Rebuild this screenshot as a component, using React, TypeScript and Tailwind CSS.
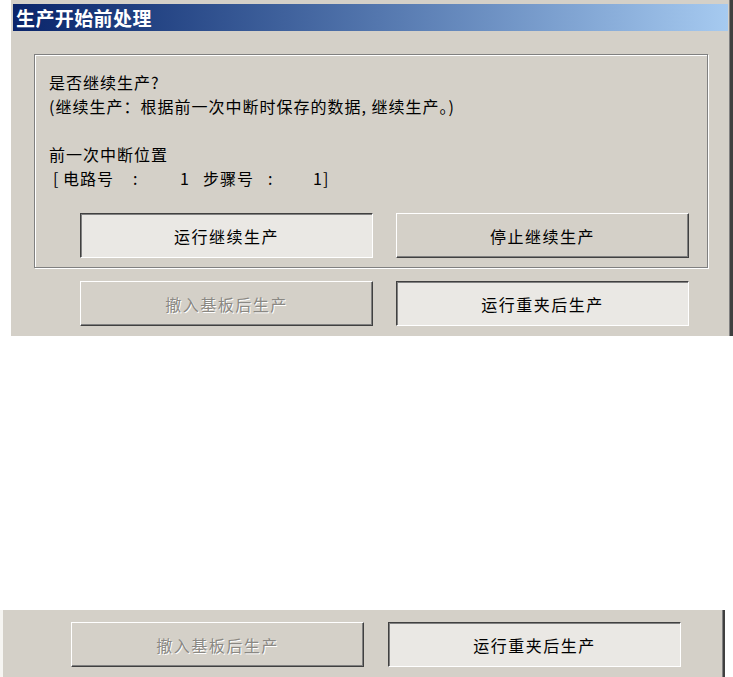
import React from "react";

type Kind = "raised" | "pressed" | "disabled";

function ClassicButton({ label, kind }: { label: string; kind: Kind }) {
  const frame =
    kind === "pressed"
      ? "border border-t-[#404040] border-l-[#404040] border-b-white border-r-white shadow-[inset_1px_1px_0_#808080] bg-[#eae8e4]"
      : "border border-t-white border-l-white border-b-[#404040] border-r-[#404040] shadow-[inset_-1px_-1px_0_#808080] bg-[#d4d0c8]";
  const text =
    kind === "disabled"
      ? "text-[#8a8883] [text-shadow:1px_1px_0_#ffffff]"
      : "text-black";
  return (
    <div
      className={`flex h-[45px] w-[293px] shrink-0 items-center justify-center text-[16px] leading-none tracking-[1.5px] ${frame} ${text}`}
    >
      {label}
    </div>
  );
}

export default function App() {
  return (
    <div className="min-h-[677px] w-[733px] bg-white font-['Noto_Sans_CJK_SC',sans-serif] text-black">
      {/* dialog window */}
      <div className="ml-[10px] w-[723px] border-l border-r-[3px] border-l-white border-r-[#404040] bg-[#d4d0c8] pt-[4px] pr-[2px] pb-[10px] pl-[2px] shadow-[inset_-1px_0_0_#808080]">
        <div className="flex h-[27px] items-center bg-gradient-to-r from-[#0a246a] to-[#a6caf0] pl-[3px] text-[19px] font-bold leading-none tracking-[0.4px] text-white">
          生产开始前处理
        </div>

        <div className="ml-[21px] mt-[23px] w-[674px] border border-[#808080] pt-[15px] pb-[9px] pl-[14px] shadow-[inset_1px_1px_0_#ffffff,1px_1px_0_#ffffff]">
          <div className="text-[16px] leading-[24px] tracking-[1px]">
            <div>是否继续生产?</div>
            <div>(继续生产：根据前一次中断时保存的数据, 继续生产。)</div>
            <div>&nbsp;</div>
            <div>前一次中断位置</div>
            <div className="flex">
              <span className="w-[14px] pl-[4px]">[</span>
              <span className="w-[70px]">电路号</span>
              <span className="w-[47px]">:</span>
              <span className="w-[23px]">1</span>
              <span className="w-[65px]">步骤号</span>
              <span className="w-[45px]">:</span>
              <span className="w-[10px]">1</span>
              <span>]</span>
            </div>
          </div>
          <div className="ml-[31px] mt-[23px] flex gap-[23px]">
            <ClassicButton label="运行继续生产" kind="pressed" />
            <ClassicButton label="停止继续生产" kind="raised" />
          </div>
        </div>

        <div className="ml-[67px] mt-[13px] flex gap-[23px]">
          <ClassicButton label="撤入基板后生产" kind="disabled" />
          <ClassicButton label="运行重夹后生产" kind="pressed" />
        </div>
      </div>

      <div className="h-[274px]" />

      {/* repeated button strip */}
      <div className="flex h-[67px] w-[725px] gap-[24px] border-l-[3px] border-r-2 border-l-[#f6f5f2] border-r-[#404040] bg-[#d4d0c8] pt-[12px] pl-[68px] shadow-[inset_-1px_0_0_#808080]">
        <ClassicButton label="撤入基板后生产" kind="disabled" />
        <ClassicButton label="运行重夹后生产" kind="pressed" />
      </div>
    </div>
  );
}
